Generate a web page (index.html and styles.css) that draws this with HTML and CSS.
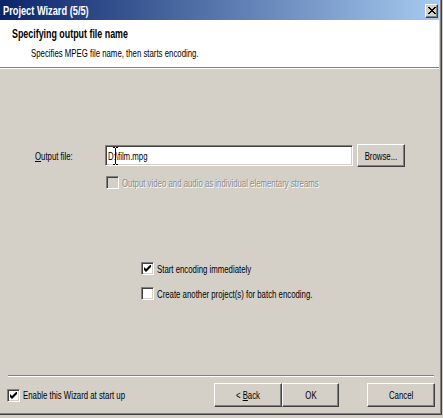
FILE: index.html
```html
<!DOCTYPE html>
<html lang="en">
<head>
    <meta charset="UTF-8">
    <meta name="viewport" content="width=device-width, initial-scale=1.0">
    <title>Project Wizard (5/5)</title>
    <link rel="stylesheet" href="styles.css">
</head>
<body>
    <div class="window">
      <div class="titlebar">
        <span class="title sq">Project Wizard (5/5)</span>
        <span class="close">
          <svg width="8" height="7" viewBox="0 0 8 7"><path d="M0 0L7 7M1 0L8 7M7 0L0 7M8 0L1 7" stroke="#000" stroke-width="1"/></svg>
        </span>
      </div>

      <div class="header">
        <div class="heading"><span class="sq">Specifying output file name</span></div>
        <div class="subheading"><span class="sq">Specifies MPEG file name, then starts encoding.</span></div>
      </div>

      <div class="content">
        <div class="file-row">
          <label class="field-label"><span class="sq"><u>O</u>utput file:</span></label>
          <div class="textbox">
            <span class="sq">D:\film.mpg</span>
            <!-- mouse pointer caught in the shot -->
            <svg class="ibeam" width="5" height="18" viewBox="0 0 5 18"><path d="M0 .5h2M3 .5h2M2.5 1v16M0 17.5h2M3 17.5h2" stroke="#000"/></svg>
          </div>
          <button class="btn browse"><span class="sq">Browse...</span></button>
        </div>

        <div class="check disabled streams">
          <span class="box"></span>
          <span class="sq">Output video and audio as individual elementary streams</span>
        </div>

        <div class="options">
          <div class="check">
            <span class="box"><svg width="7" height="7" viewBox="0 0 7 7"><path d="M0 2L2 4L6 0L7 0L7 2L2 7L0 5Z"/></svg></span>
            <span class="sq">Start encoding immediately</span>
          </div>
          <div class="check">
            <span class="box"></span>
            <span class="sq">Create another project(s) for batch encoding.</span>
          </div>
        </div>
      </div>

      <div class="footer">
        <div class="rule"></div>
        <div class="actions">
          <div class="check">
            <span class="box"><svg width="7" height="7" viewBox="0 0 7 7"><path d="M0 2L2 4L6 0L7 0L7 2L2 7L0 5Z"/></svg></span>
            <span class="sq">Enable this Wizard at start up</span>
          </div>
          <div class="buttons">
            <button class="btn back"><span class="sq">&lt; <u>B</u>ack</span></button>
            <button class="btn ok"><span class="sq">OK</span></button>
            <button class="btn cancel"><span class="sq">Cancel</span></button>
          </div>
        </div>
      </div>
    </div>
</body>
</html>
```

FILE: styles.css
```css
body {
  margin: 0;
  background: #d4d0c8;
  font-family: "Liberation Sans", Arial, sans-serif;
  font-size: 11px;
  color: #000;
}
/* text in the shot is squeezed sideways */
.sq {
  display: inline-block;
  white-space: nowrap;
  transform: scaleX(.71);
  transform-origin: 0 50%;
}
.window {
  width: 442px;
  height: 415px;
  box-sizing: border-box;
  padding: 0 2px 1px 0;
  border-right: 1px solid #404040;
  border-bottom: 1px solid #404040;
  box-shadow: inset -1px -1px #808080;
  display: flex;
  flex-direction: column;
}

.titlebar {
  height: 20px;
  flex: none;
  display: flex;
  align-items: center;
  justify-content: space-between;
  padding: 1px 1px 0 3px;
  box-sizing: border-box;
  background: linear-gradient(to right, #0a246a, #a6caf0);
}
.title {
  color: #fff;
  font-size: 12px;
  font-weight: bold;
  transform: scaleX(.77);
}
.close {
  width: 13px;
  height: 14px;
  box-sizing: border-box;
  display: flex;
  align-items: center;
  justify-content: center;
  background: #d4d0c8;
  border: 1px solid;
  border-color: #fff #404040 #404040 #fff;
  box-shadow: inset -1px -1px #808080;
}

.header {
  height: 48px;
  flex: none;
  box-sizing: border-box;
  background: #fff;
  border-bottom: 1px solid #808080;
  padding-top: 7px;
  line-height: 14px;
}
.heading {
  padding-left: 12px;
  font-size: 12px;
  font-weight: bold;
}
.heading .sq {
  transform: scaleX(.74);
}
.subheading {
  margin-top: 5px;
  padding-left: 31px;
}

.content {
  flex: 1;
  border-top: 1px solid #fff;
}
.file-row {
  display: flex;
  align-items: center;
  margin-top: 75px;
  padding-left: 35px;
}
.field-label {
  width: 70px;
}
.textbox {
  position: relative;
  width: 248px;
  height: 21px;
  box-sizing: border-box;
  display: flex;
  align-items: center;
  padding-left: 2px;
  background: #fff;
  border: 1px solid;
  border-color: #808080 #fff #fff #808080;
  box-shadow: inset 1px 1px #404040, inset -1px -1px #d4d0c8;
}
.ibeam {
  position: absolute;
  left: 7px;
  top: 1px;
}

.btn {
  height: 23px;
  padding: 0;
  box-sizing: border-box;
  background: #d4d0c8;
  font: inherit;
  color: #000;
  border: 1px solid;
  border-color: #fff #404040 #404040 #fff;
  box-shadow: inset -1px -1px #808080;
}
.btn .sq {
  transform-origin: 50% 50%;
}
.browse {
  width: 48px;
  margin-left: 4px;
}

.check {
  display: flex;
  align-items: center;
  height: 13px;
}
.box {
  width: 13px;
  height: 13px;
  flex: none;
  box-sizing: border-box;
  margin-right: 3px;
  display: flex;
  align-items: center;
  justify-content: center;
  background: #fff;
  border: 1px solid;
  border-color: #808080 #fff #fff #808080;
  box-shadow: inset 1px 1px #404040, inset -1px -1px #d4d0c8;
}
.disabled {
  color: #8a8a8a;
  text-shadow: 1px 1px #fff;
}
.disabled .box {
  background: #d4d0c8;
}
.streams {
  margin-top: 9px;
  padding-left: 106px;
}
.options {
  margin-top: 73px;
  padding-left: 141px;
  display: flex;
  flex-direction: column;
  gap: 12px;
}

.footer {
  flex: none;
  height: 38px;
}
.rule {
  margin: 0 5px 0 8px;
  border-top: 1px solid #808080;
  border-bottom: 1px solid #fff;
}
.actions {
  margin-top: 6px;
  height: 24px;
  display: flex;
  align-items: center;
  justify-content: space-between;
  padding: 0 4px 0 7px;
}
.buttons {
  display: flex;
}
.buttons .btn {
  height: 24px;
}
.back {
  width: 68px;
}
.ok {
  width: 57px;
}
.cancel {
  width: 68px;
  margin-left: 28px;
}
```
